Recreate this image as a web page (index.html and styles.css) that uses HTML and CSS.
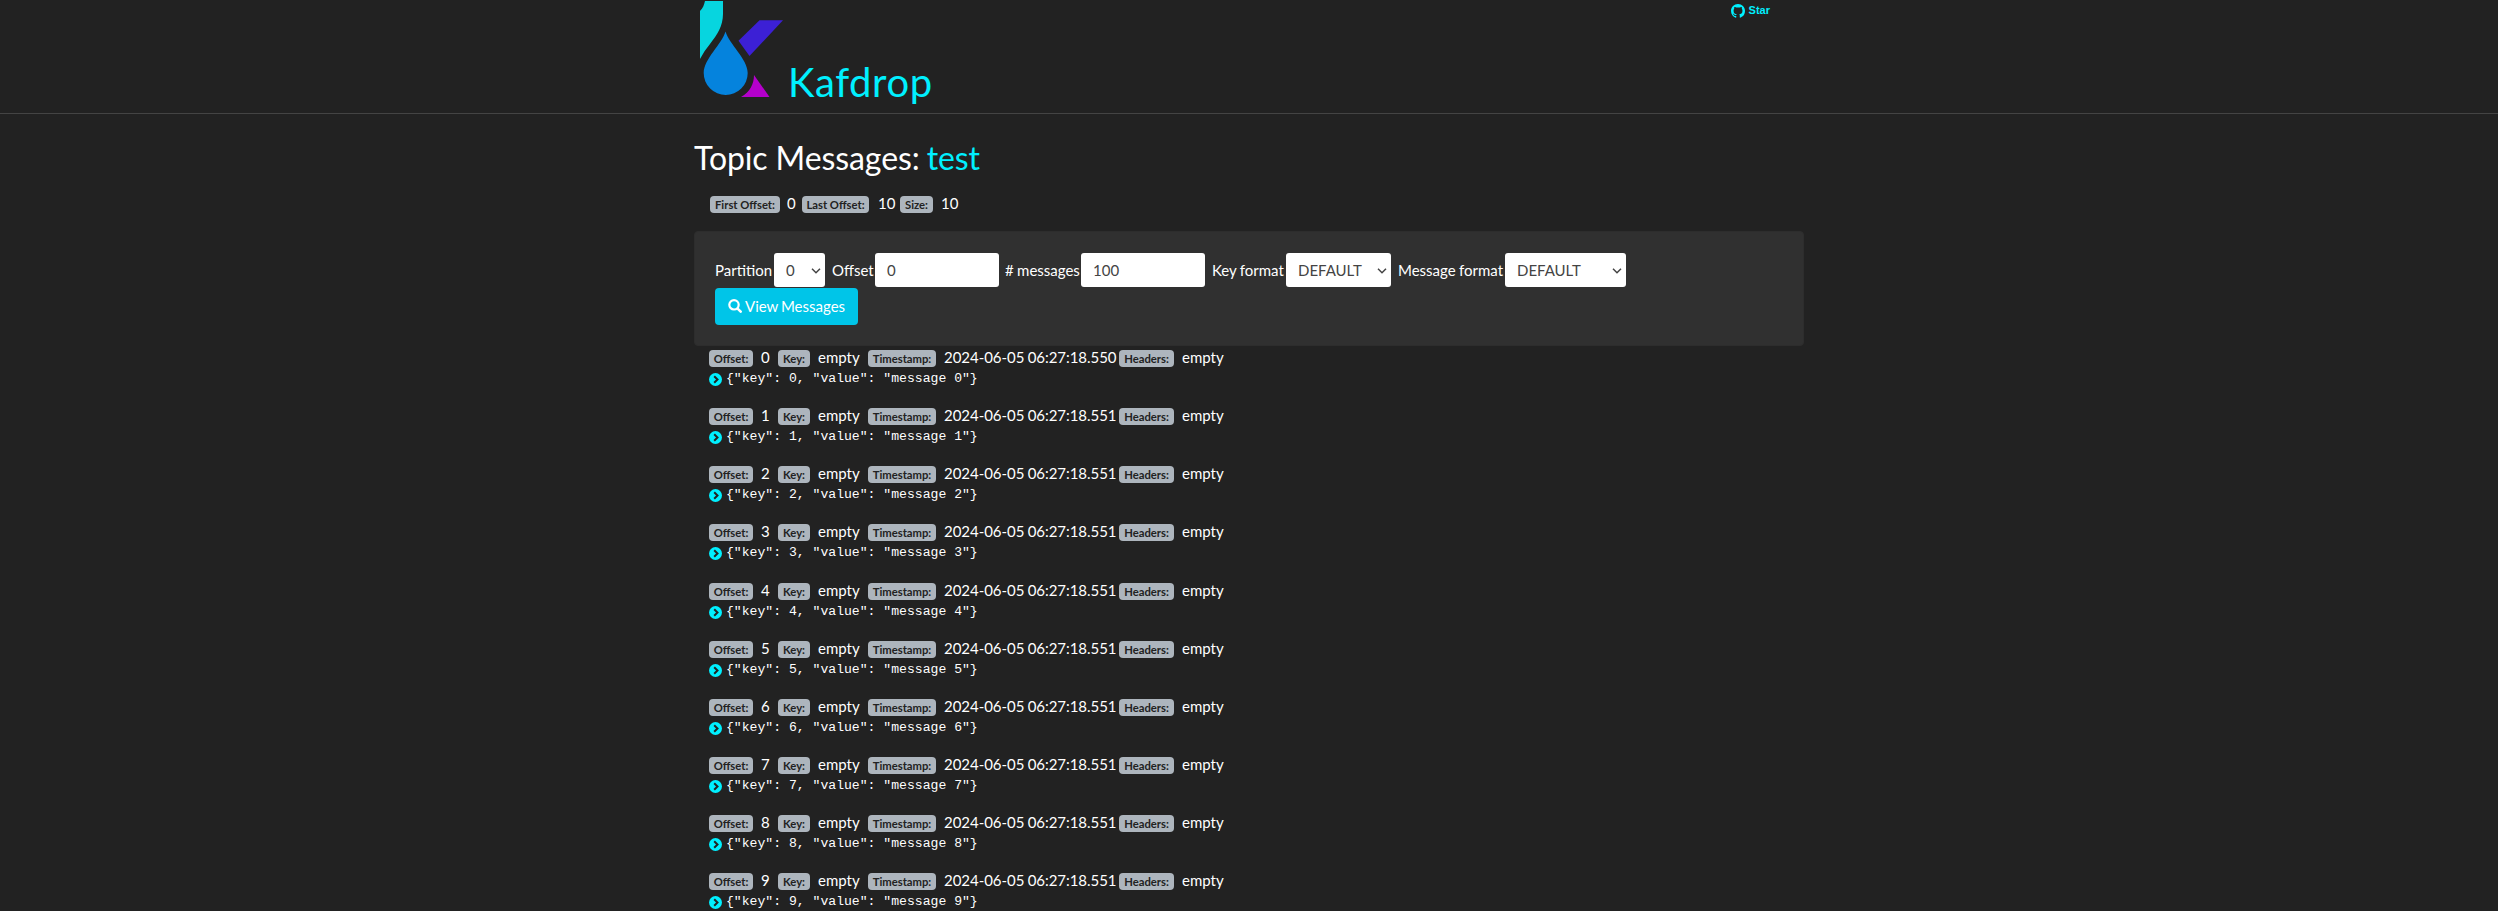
FILE: index.html
```html
<!DOCTYPE html>
<html lang="en">
<head>
<meta charset="utf-8">
<title>Kafdrop: Topic Messages</title>
<link rel="stylesheet" href="styles.css">
</head>
<body>
<header class="site-header">
  <div class="container header-inner">
    <a class="brand">
      <svg class="logo" viewBox="0 0 90 100" width="90" height="100">
        <path fill="#07d5df" d="M6 11C9 8 10 5 11 1H29V14C29 26 23 35 16 44Q10 51 6 59Z"/>
        <path fill="#3c20d5" d="M65.500 20.300H89L55.500 56L44.500 40.700Z"/>
        <path fill="#b400cb" d="M60 75L75.500 97H47C56 92 60 84 60 75Z"/>
        <path fill="#0583dd" d="M31.500 31.500C35 44 53.700 59 53.700 73A22 22 0 0 1 9.700 73C9.700 59 28 44 31.500 31.500Z"/>
      </svg>
      <span class="brand-name">Kafdrop</span>
    </a>
    <a class="star">
      <svg viewBox="0 0 16 16" width="14" height="14" fill="currentColor"><path d="M8 0C3.580 0 0 3.580 0 8c0 3.540 2.290 6.530 5.470 7.590.4.070.55-.17.55-.38 0-.19-.01-.82-.01-1.490-2.010.37-2.530-.49-2.690-.94-.09-.23-.48-.94-.82-1.130-.28-.15-.68-.52-.01-.53.63-.01 1.080.58 1.230.82.72 1.210 1.870.87 2.330.66.07-.52.28-.87.51-1.070-1.780-.2-3.640-.89-3.640-3.950 0-.87.31-1.590.82-2.150-.08-.2-.36-1.020.08-2.120 0 0 .67-.21 2.200.82.64-.18 1.320-.27 2-.27s1.360.09 2 .27c1.530-1.040 2.200-.82 2.200-.82.44 1.100.16 1.920.08 2.120.51.56.82 1.270.82 2.150 0 3.070-1.870 3.750-3.650 3.950.29.25.54.73.54 1.480 0 1.070-.01 1.930-.01 2.200 0 .21.15.46.55.38A8.010 8.010 0 0 0 16 8c0-4.420-3.580-8-8-8Z"/></svg>
      <span>Star</span>
    </a>
  </div>
</header>
<main class="container">
  <h2 class="title">Topic Messages: <a>test</a></h2>
  <div class="summary">
    <span class="badge first-offset">First Offset:</span><span class="first-value">0</span>
    <span class="badge last-offset">Last Offset:</span><span class="last-value">10</span>
    <span class="badge size">Size:</span><span>10</span>
  </div>
  <form class="panel">
    <div class="fields">
      <label class="partition">Partition <select><option>0</option></select></label>
      <label class="offset">Offset <input type="text" value="0"></label>
      <label class="count">#&nbsp;messages <input type="text" value="100"></label>
      <label class="key-format">Key&nbsp;format <select><option>DEFAULT</option></select></label>
      <label class="message-format">Message&nbsp;format <select><option>DEFAULT</option></select></label>
    </div>
    <button type="button" class="view">
      <svg viewBox="0 0 14 14" width="14" height="14" fill="none" stroke="currentColor"><circle cx="6" cy="5.800" r="4.700" stroke-width="2.200"/><path d="M9.600 9.600L12.700 12.700" stroke-width="2.500" stroke-linecap="round"/></svg>
      <span>View Messages</span>
    </button>
  </form>
  <div class="messages" id="messages"></div>
</main>
<template id="message">
  <article class="message">
    <div class="meta">
      <span class="badge b-offset">Offset:</span><span class="v-offset"></span>
      <span class="badge b-key">Key:</span><span class="v-key">empty</span>
      <span class="badge b-time">Timestamp:</span><span class="v-time"></span>
      <span class="badge b-headers">Headers:</span><span>empty</span>
    </div>
    <div class="body">
      <svg class="toggle" viewBox="0 0 13 13" width="13" height="13"><circle cx="6.500" cy="6.500" r="6.500" fill="#00f0ff"/><path d="M5.200 3.200L8.500 6.500L5.200 9.800" fill="none" stroke="#222" stroke-width="2"/></svg>
      <pre></pre>
    </div>
  </article>
</template>
<script src="script.js"></script>
</body>
</html>
```
FILE: styles.css
```css
* { box-sizing: border-box; }
html, body { height: 100%; }
body {
  margin: 0;
  overflow: hidden;
  background: #222;
  color: #fff;
  font: 15px/22.5px Lato, sans-serif;
}
.container { width: 1110px; margin: 0 auto; }
.site-header { height: 114px; border-bottom: 1px solid #444; }
.header-inner { display: flex; justify-content: space-between; }
.brand { display: flex; color: #00f0ff; }
.logo { flex: none; }
.brand-name { padding: 58px 0 0 4px; font-size: 40px; line-height: 48px; letter-spacing: 0.6px; }
.star {
  display: flex;
  gap: 4px;
  padding: 4px 34px 0 0;
  color: #00f0ff;
  font: bold 11px/12px "Liberation Sans", sans-serif;
}
.title { margin: 25px 0 0; font-size: 32px; line-height: 38px; font-weight: 400; letter-spacing: -0.1px; }
.title a { margin-left: -1px; color: #00f0ff; }
.summary { display: flex; height: 54px; padding: 15px 0 0 16px; }
.badge {
  flex: none;
  height: 17px;
  margin-top: 4px;
  padding: 3px 0 0;
  border-radius: 4px;
  background: #adb5bd;
  color: #222;
  text-align: center;
  font-size: 11.25px;
  line-height: 11.25px;
  font-weight: 700;
}
.first-offset { width: 70px; margin-right: 7px; }
.first-value { width: 15px; }
.last-offset { width: 67px; margin-right: 9px; }
.last-value { width: 22px; }
.size { width: 33px; margin-right: 8px; }
.panel {
  height: 115px;
  padding: 21px 20px;
  border: 1px solid #2d2d2d;
  border-radius: 4px;
  background: #303030;
}
.fields { display: flex; margin-bottom: 1px; }
.fields label { display: flex; align-items: center; justify-content: space-between; height: 34px; margin-right: 6px; white-space: nowrap; word-spacing: -0.5px; }
.fields .partition { width: 110px; margin-right: 7px; }
.offset { width: 167px; }
.fields .count { width: 200px; margin-right: 7px; }
.fields .key-format { width: 179px; margin-right: 7px; }
.message-format { width: 228px; }
input, select {
  height: 34px;
  border: 0;
  border-radius: 3px;
  background: #fff;
  color: #444;
  font: 15px Lato, sans-serif;
}
input { width: 124px; padding: 0 12px; }
select {
  width: 51px;
  padding: 0 12px;
  appearance: none;
  background: #fff url("data:image/svg+xml,%3Csvg xmlns='http://www.w3.org/2000/svg' width='10' height='6' viewBox='0 0 10 6'%3E%3Cpath d='M1 .8L5 4.8L9 .8' fill='none' stroke='%23444' stroke-width='1.5'/%3E%3C/svg%3E") no-repeat right 4px top 15px;
}
.key-format select { width: 105px; }
.message-format select { width: 121px; }
.view {
  display: flex;
  align-items: center;
  gap: 3px;
  width: 143px;
  height: 37px;
  padding: 0 0 1px 13px;
  border: 0;
  border-radius: 4px;
  background: #00c5e8;
  color: #fff;
  font: 15px Lato, sans-serif;
  word-spacing: -1px;
  white-space: nowrap;
}
.messages { padding: 0 0 0 15px; }
.message { height: 58.125px; }
.meta { display: flex; height: 23px; }
.b-offset { width: 44px; margin-right: 8px; }
.v-offset { width: 17px; }
.b-key { width: 32px; margin-right: 8px; }
.v-key { width: 50px; }
.b-time { width: 68px; margin-right: 8px; }
.v-time { width: 175px; white-space: nowrap; letter-spacing: -0.04px; word-spacing: -0.5px; }
.b-headers { width: 55px; margin-right: 8px; }
.body { display: flex; gap: 4px; }
.toggle { flex: none; margin-top: 4px; }
pre { margin: 0; font: 13.125px/19px "Liberation Mono", monospace; }
```
FILE: script.js
```js
const list = document.getElementById('messages');
const template = document.getElementById('message');

for (let i = 0; i < 10; i++) {
  const row = template.content.cloneNode(true);
  row.querySelector('.v-offset').textContent = i;
  row.querySelector('.v-time').textContent = '2024-06-05 06:27:18.' + (i ? '551' : '550');
  row.querySelector('pre').textContent = `{"key": ${i}, "value": "message ${i}"}`;
  list.append(row);
}
```
